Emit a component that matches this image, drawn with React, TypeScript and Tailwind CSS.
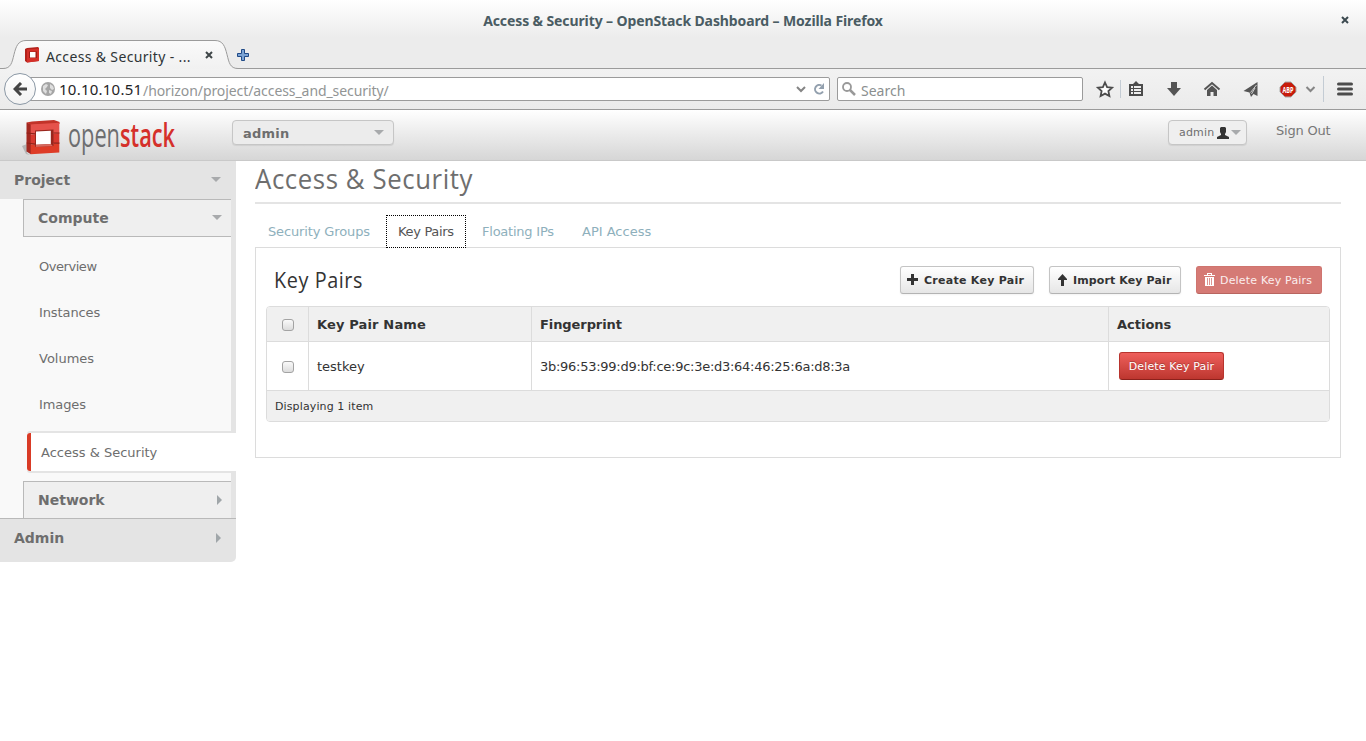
import React from "react";

const chrome = "font-['Noto_Sans',sans-serif]";

function Down({ className = "" }: { className?: string }) {
  return (
    <svg width="10" height="5" viewBox="0 0 10 5" className={"shrink-0 " + className}>
      <path d="M0 0h10L5 5z" fill="#a8aaac" />
    </svg>
  );
}

function Right() {
  return (
    <svg width="5" height="10" viewBox="0 0 5 10" className="shrink-0">
      <path d="M0 0v10l5-5z" fill="#a0a6a9" />
    </svg>
  );
}

function Cube() {
  return (
    <svg width="38" height="38" viewBox="0 0 38 38" className="shrink-0">
      <path d="M0 28l5-2v9l3 2-4-1z" fill="#b5b5b5" />
      <path d="M4.500 4.500L9 6v30.200L4.500 33.500z" fill="#a32820" />
      <path d="M4.500 4.500L10 3.500 32 2l5.500 2v2L9 7z" fill="#c23329" />
      <path d="M8.700 6.500L37.300 4.800V15L8.700 16.500z" fill="#e5524b" />
      <path d="M8.700 16.500L37.300 15v10L8.700 26.500z" fill="#d8392f" />
      <path d="M8.700 26.500L37.300 25v9.500L8.700 36.200z" fill="#de3c27" />
      <path d="M13 12.500l18.500-1v16.500l-18.500 1z" fill="#98261d" />
      <path d="M14 13.500l14.800-.7V26l-14.800.8z" fill="#fff" />
      <path d="M14 26.800l14.800-.8 2 2-17 1z" fill="#d86a5f" />
      <path d="M4.500 15l8.500.8M31.500 15h6M4.500 25l8.500 1.200M31.500 25.200h6" stroke="#8f231b" strokeWidth="1.200" />
    </svg>
  );
}

function Favicon() {
  return (
    <svg width="15" height="16" viewBox="0 0 15 16" className="-ml-px mb-px shrink-0">
      <path d="M0 2l2-1 11-1 1 1v13L2 15.500 0 14z" fill="#b3221b" />
      <path d="M2 2.500L14 1.500V14L2 15.500z" fill="#d5302a" />
      <path d="M4 4.500h8V11H4z" fill="#a01d17" />
      <path d="M5 5h5.500v5.500H5z" fill="#fff" />
    </svg>
  );
}

function Checkbox() {
  return (
    <span
      role="checkbox"
      aria-checked="false"
      className="mt-px block h-3 w-3 rounded-[3px] border border-[#a3a3a3] bg-gradient-to-b from-[#fafafa] to-[#dcdcdc]"
    />
  );
}

function Chrome() {
  return (
    <div className={chrome}>
      <div className="flex h-[69px] flex-col border-b border-[#9b9b9b] bg-[linear-gradient(#fff_0px,#ececec_38px,#ececec_69px)]">
        <div className="relative flex h-10 shrink-0 items-center justify-center text-[14px] font-bold text-[#4a5c63]">
          <span className="whitespace-nowrap tracking-[-0.110px]">Access &amp; Security – OpenStack Dashboard – Mozilla Firefox</span>
          <svg width="8" height="8" viewBox="0 0 8 8" className="absolute right-[17px] top-4">
            <path d="M1 1l6 6M7 1L1 7" stroke="#3c4a50" strokeWidth="2" />
          </svg>
        </div>
        <div className="flex h-[29px] shrink-0">
          <div className="relative h-[29px] w-[238px] shrink-0">
            <svg width="238" height="29" viewBox="0 0 238 29" className="absolute left-0 top-0">
              <defs>
                <linearGradient id="tab" x2="0" y2="1">
                  <stop stopColor="#fafafa" />
                  <stop offset="1" stopColor="#f1f1f1" />
                </linearGradient>
              </defs>
              <path d="M0 28.500h3c8 0 9-6 11-14S18 .5 26 .5h189c8 0 10 6 12 14s3 14 11 14V29H0z" fill="url(#tab)" />
              <path d="M0 28.500h3c8 0 9-6 11-14S18 .5 26 .5h189c8 0 10 6 12 14s3 14 11 14" fill="none" stroke="#9b9b9b" />
            </svg>
            <div className="relative flex h-full items-center pl-[26px] pt-[2px] text-[14px] text-[#2e3436]">
              <Favicon />
              <span className="ml-[6px] mt-px w-[159px] whitespace-nowrap tracking-[0.350px]">Access &amp; Security - ...</span>
              <svg width="8" height="8" viewBox="0 0 8 8" className="mb-[2px]">
                <path d="M1 1l6 6M7 1L1 7" stroke="#3f4648" strokeWidth="2" />
              </svg>
            </div>
          </div>
          <svg width="12" height="12" viewBox="0 0 12 12" className="-ml-px mt-[9px]">
            <path d="M4.500.5h3v4h4v3h-4v4h-3v-4h-4v-3h4z" fill="#7ba3d4" stroke="#204a87" />
          </svg>
        </div>
      </div>
      <div className="flex h-[41px] items-center border-b border-[#9b9b9b] bg-gradient-to-b from-[#f2f2f2] to-[#ebebeb]">
        <div className="relative z-10 ml-1 flex h-8 w-8 shrink-0 items-center justify-center rounded-full border border-[#8b98a5] bg-gradient-to-b from-white to-[#f2f2f2]">
          <svg width="14" height="14" viewBox="0 0 14 14">
            <path d="M8 1L2 7l6 6M2.500 7H14" fill="none" stroke="#454545" strokeWidth="3" />
          </svg>
        </div>
        <div className="-ml-3 flex h-6 w-[806px] shrink-0 items-center rounded-r-[2px] border border-[#9b9b9b] bg-white pl-4 text-[14px]">
          <svg width="14" height="14" viewBox="0 0 14 14" className="shrink-0">
            <circle cx="7" cy="7" r="7" fill="#a5a5a5" />
            <path d="M2 4l3-2 2 1-1 2-2 2 2 2-1 3-3-3zM9 2l3 2 1 3-2 1-2-2zM8 8l3 1-1 3-2-1z" fill="#dedede" />
          </svg>
          <span className="ml-1 mt-px w-[84px] text-[15px] tracking-[0.240px] text-[#1f2426]">10.10.10.51</span>
          <span className="mt-[2px] flex-1 tracking-[-0.080px] text-[#929595]">/horizon/project/access_and_security/</span>
          <svg width="10" height="7" viewBox="0 0 10 7" className="mr-[7px]">
            <path d="M1 1l4 4 4-4" fill="none" stroke="#858585" strokeWidth="2" />
          </svg>
          <svg width="12" height="12" viewBox="0 0 12 12" className="mr-1">
            <path d="M8.500 2.500A4.300 4.300 0 1 0 10 8.500" fill="none" stroke="#93a0ae" strokeWidth="2" />
            <path d="M11 0v6H5.500z" fill="#93a0ae" />
          </svg>
        </div>
        <div className="ml-[7px] flex h-6 w-[246px] shrink-0 items-center rounded-[2px] border border-[#9b9b9b] bg-white pl-1 text-[14px] text-[#8b8f8f]">
          <svg width="14" height="14" viewBox="0 0 14 14">
            <circle cx="5" cy="5" r="4" fill="none" stroke="#999" strokeWidth="1.800" />
            <path d="M8 8l5 5" stroke="#999" strokeWidth="2.500" />
          </svg>
          <span className="ml-[5px] mt-[2px]">Search</span>
        </div>
        <svg width="283" height="40" viewBox="1083 69 283 40" className="shrink-0">
          <path d="M1105 82.500l2.100 4.600 5 .6-3.700 3.400 1 5-4.400-2.500-4.400 2.500 1-5-3.700-3.400 5-.6z" fill="#fff" stroke="#4c4c4c" strokeWidth="1.800" />
          <path d="M1120.500 80v18" stroke="#c4ccd4" />
          <path d="M1129 84h4l3-3 3 3h4v12h-14z" fill="#4c4c4c" />
          <path d="M1131 86h2v2h-2zm3 0h7v2h-7zm-3 3h2v2h-2zm3 0h7v2h-7zm-3 3h2v2h-2zm3 0h7v2h-7z" fill="#eee" />
          <path d="M1171 82h6v6h4l-7 8-7-8h4z" fill="#555" />
          <path d="M1204.500 89.500l7.500-6.500 7.500 6.500" fill="none" stroke="#555" strokeWidth="2" />
          <path d="M1207 90l5-4.500 5 4.500v6h-3.500v-4h-3v4h-3.500z" fill="#555" />
          <path d="M1257.500 82v14l-4-2-2.500 3-1.500-4.500-6-1.500z" fill="#555" />
          <path d="M1256.500 85l-6 7.500M1255 88l-3.500 6" stroke="#eee" strokeWidth=".8" />
          <path d="M1285 82h6l5 5v5l-5 5h-6l-5-5v-5z" fill="#c81c0c" stroke="#a9aaa8" />
          <text x="1288" y="92.500" textAnchor="middle" fontSize="8" fontWeight="700" fontFamily="Open Sans" fill="#fff" textLength="11" lengthAdjust="spacingAndGlyphs">ABP</text>
          <path d="M1306.500 87l4 4 4-4" fill="none" stroke="#858585" strokeWidth="2" />
          <path d="M1323.500 76v26" stroke="#c4ccd4" />
          <path d="M1338.500 84h13M1338.500 89h13M1338.500 94h13" stroke="#4c4c4c" strokeWidth="3" strokeLinecap="round" />
        </svg>
      </div>
    </div>
  );
}

function Header() {
  return (
    <header className="flex h-[51px] border-b border-[#c9c9c9] bg-gradient-to-b from-white to-[#d6d6d6]">
      <div className="flex w-[232px] items-start pl-[22px]">
        <div className="pt-2"><Cube /></div>
        <div className="ml-[8px] mt-[2px] w-[110px] whitespace-nowrap font-['Open_Sans',sans-serif] text-[32px] leading-[46px]">
          <span className="flex w-max origin-left scale-x-[0.680]">
            <span className="font-medium text-[#6d6e70]">open</span>
            <span className="font-semibold text-[#d5302a]">stack</span>
          </span>
        </div>
      </div>
      <div className="mt-[10px] flex h-[25px] w-[162px] shrink-0 items-center justify-between rounded border border-[#c6c6c6] bg-[#ececec] pl-[10px] pr-[9px] text-[13px] font-bold text-[#6e6e6e] shadow-[0_1px_1px_rgba(0,0,0,0.08)]">
        <span className="mt-[2px] tracking-[0.200px]">admin</span>
        <Down />
      </div>
      <div className="ml-auto mr-[29px] mt-[10px] flex h-[25px] w-[79px] items-center rounded border border-[#c6c6c6] bg-[#efefef] pl-[10px] text-[11px] text-[#6e6e6e] shadow-[0_1px_1px_rgba(0,0,0,0.08)]">
        <span className="mt-[2px] w-[38px] shrink-0 tracking-[0.200px]">admin</span>
        <svg width="12" height="12" viewBox="0 0 12 12" className="shrink-0">
          <path d="M4 0h4l1 1v4L8 7v1l4 2v2H0v-2l4-2V7L3 5V1z" fill="#333" />
        </svg>
        <Down className="ml-[2px]" />
      </div>
      <span className="mr-[35px] mt-3 w-[55px] whitespace-nowrap text-[13px] leading-[18px] tracking-[-0.200px] text-[#777]">Sign Out</span>
    </header>
  );
}

function Sidebar() {
  return (
    <nav className="h-[401px] w-[236px] shrink-0 overflow-hidden rounded-br-[5px] bg-[#e4e4e4] text-[#6e6e6e]">
      <div className="flex h-[38px] items-center justify-between pl-[14px] pr-[15px] text-[14px] font-bold">
        <span>Project</span>
        <Down className="mb-px" />
      </div>
      <div className="h-[320px] border-b border-[#b9b9b9] bg-[linear-gradient(90deg,#f9f9f9_231px,#e4e4e4_231px)]">
        <div className="ml-[23px] flex h-[38px] w-[208px] items-center justify-between border-y border-l border-[#b9b9b9] bg-[#efefef] pl-[14px] pr-[9px] text-[14px] font-bold">
          <span>Compute</span>
          <Down className="mb-px" />
        </div>
        <div className="flex h-[194px] flex-col pl-[39px] pt-[7px] text-[13px]">
          <span className="flex h-[46px] items-center tracking-[-0.450px]">Overview</span>
          <span className="flex h-[46px] items-center tracking-[-0.100px]">Instances</span>
          <span className="flex h-[46px] items-center">Volumes</span>
          <span className="flex h-[46px] items-center tracking-[-0.100px]">Images</span>
        </div>
        <div className="ml-[27px] h-[42px] rounded-l-[3px] border-y-2 border-[#e4e4e4] bg-white">
          <div className="flex h-full items-center rounded-l-[3px] border-l-4 border-[#d93b26] pl-[10px] pt-px text-[13px]">Access &amp; Security</div>
        </div>
        <div className="ml-[23px] mt-2 flex h-[37px] w-[208px] items-center justify-between border-l border-t border-[#b9b9b9] bg-[#efefef] pl-[14px] pr-[9px] text-[14px] font-bold">
          <span>Network</span>
          <Right />
        </div>
      </div>
      <div className="flex h-[38px] items-center justify-between pl-[14px] pr-[15px] text-[14px] font-bold">
        <span>Admin</span>
        <Right />
      </div>
    </nav>
  );
}

const btn =
  "flex h-7 items-center rounded-[3px] border border-[#c4c4c4] border-b-[#b3b3b3] bg-gradient-to-b from-white to-[#e6e6e6] pl-[6px] text-[11px] font-bold text-[#333] shadow-[0_1px_2px_rgba(0,0,0,0.05)]";

function Main() {
  return (
    <main className="ml-[19px] w-[1086px] text-[13px] text-[#333]">
      <h1 className="h-[43px] border-b-2 border-[#e4e4e4] font-['Open_Sans',sans-serif] text-[28px] leading-[35px] text-[#6e6e6e]">
        <span className="inline-block origin-left scale-x-[0.920] tracking-[0.640px]">Access &amp; Security</span>
      </h1>
      <div className="relative z-10 -mb-px mt-[11px] flex h-[33px] items-center text-[#8eb0bc]">
        <span className="w-[131px] pl-[13px] tracking-[-0.130px]">Security Groups</span>
        <span className="flex h-[33px] w-[80px] items-center border border-dotted border-black bg-white pl-[11px] tracking-[-0.330px] text-[#555]">Key Pairs</span>
        <span className="w-[116px] pl-[16px] tracking-[-0.230px]">Floating IPs</span>
        <span>API Access</span>
      </div>
      <section className="h-[211px] border border-[#dcdcdc] px-[10px]">
        <div className="flex h-[58px] items-start pl-2 pr-2 pt-[18px]">
          <h2 className="flex-1 font-['Open_Sans',sans-serif] text-[22px] leading-[27px]">
            <span className="inline-block origin-left scale-x-[0.900] tracking-[0.650px]">Key Pairs</span>
          </h2>
          <div className={btn + " mr-[15px] w-[134px]"}>
            <svg width="11" height="11" viewBox="0 0 11 11" className="mb-px mr-[6px]">
              <path d="M4 0h3v4h4v3H7v4H4V7H0V4h4z" fill="#333" />
            </svg>
            <span className="mt-[2px] tracking-[0.270px]">Create Key Pair</span>
          </div>
          <div className={btn + " mr-[15px] w-[132px]"}>
            <svg width="13" height="12" viewBox="0 0 13 12" className="mb-px mr-[4px]">
              <path d="M6.500 0L11 5v1H8v6H5V6H2V5z" fill="#333" />
            </svg>
            <span className="mt-[2px] tracking-[0.120px]">Import Key Pair</span>
          </div>
          <div className="flex h-7 w-[126px] items-center rounded-[3px] border border-[#cf746f] border-b-[#b8655f] bg-[#d57a75] pl-[7px] text-[11px] text-[#fbeeee]">
            <svg width="11" height="13" viewBox="0 0 11 13" className="mb-px mr-[5px]">
              <path d="M0 2h3V0h5v2h3v1H0zM4 1v1h3V1zM1 4h9v9H1z" fill="#fff" fillRule="evenodd" />
              <path d="M3.500 5v7M5.500 5v7M7.500 5v7" stroke="#d57a75" strokeWidth=".8" />
            </svg>
            <span className="mt-[2px] tracking-[0.180px]">Delete Key Pairs</span>
          </div>
        </div>
        <div className="overflow-hidden rounded border border-[#dcdcdc]">
          <div className="grid h-[35px] grid-cols-[42px_223px_577px_1fr] border-b border-[#dcdcdc] bg-[#f0f0f0] font-bold">
            <div className="flex items-center justify-center border-r border-[#dcdcdc]"><Checkbox /></div>
            <div className="flex items-center border-r border-[#dcdcdc] pl-2 pt-px tracking-[0.150px]">Key Pair Name</div>
            <div className="flex items-center border-r border-[#dcdcdc] pl-2 pt-px tracking-[-0.080px]">Fingerprint</div>
            <div className="flex items-center pl-2 pt-px">Actions</div>
          </div>
          <div className="grid h-[49px] grid-cols-[42px_223px_577px_1fr] border-b border-[#dcdcdc]">
            <div className="flex items-center justify-center border-r border-[#dcdcdc]"><Checkbox /></div>
            <div className="flex items-center border-r border-[#dcdcdc] pl-2 pt-px">testkey</div>
            <div className="flex items-center border-r border-[#dcdcdc] pl-2 pt-px tracking-[-0.270px]">3b:96:53:99:d9:bf:ce:9c:3e:d3:64:46:25:6a:d8:3a</div>
            <div className="flex items-center pl-[10px]">
              <div className="flex h-7 w-[105px] items-center justify-center rounded-[3px] border border-[#b8342e] border-b-[#8c211c] bg-gradient-to-b from-[#ee5f5b] to-[#bd362f] pt-[2px] text-[11px] tracking-[0.130px] text-white [text-shadow:0_-1px_0_rgba(0,0,0,0.25)]">
                Delete Key Pair
              </div>
            </div>
          </div>
          <div className="flex h-[30px] items-center bg-[#f0f0f0] pl-2 pt-[2px] text-[11px] tracking-[0.120px]">Displaying 1 item</div>
        </div>
      </section>
    </main>
  );
}

export default function App() {
  return (
    <div className="h-[741px] w-[1366px] overflow-hidden bg-white font-['DejaVu_Sans',sans-serif]">
      <Chrome />
      <Header />
      <div className="flex">
        <Sidebar />
        <Main />
      </div>
    </div>
  );
}
